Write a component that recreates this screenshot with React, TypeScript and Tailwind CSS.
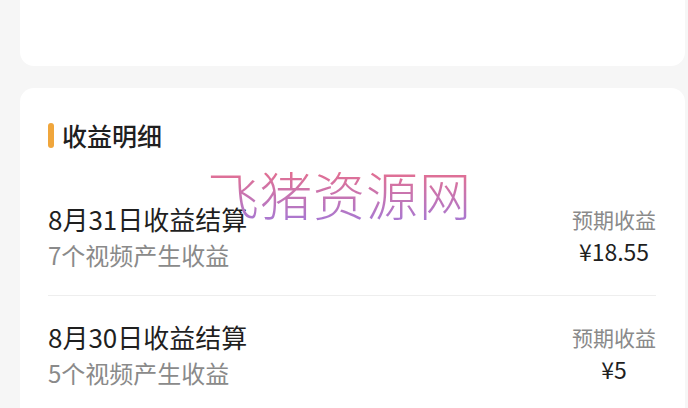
const rows = [
  { title: "8月31日收益结算", sub: "7个视频产生收益", amount: "¥18.55" },
  { title: "8月30日收益结算", sub: "5个视频产生收益", amount: "¥5" },
];

const App = () => {
  return (
    <div
      className="relative flex flex-col gap-[22px] bg-[#f6f6f6] pl-[20px] pr-[3px] w-[688px] h-[408px] overflow-hidden"
      style={{ fontFamily: '"Noto Sans CJK SC", "Noto Sans", sans-serif' }}
    >
      <div className="bg-white rounded-b-[14px] h-[66px] shrink-0" />

      <div className="flex-1 bg-white rounded-t-[14px] pt-[32px] pl-[28px] pr-[29px]">
        <div className="flex items-center h-[30px]">
          <span className="bg-[#f0a63c] mr-[8px] rounded-full w-[6px] h-[25px]" />
          <h2 className="font-medium text-[#1f1f1f] text-[25px] leading-none">收益明细</h2>
        </div>

        <div className="mt-[29px]">
          {rows.map((r, i) => (
            <div
              key={r.title}
              className={`flex justify-between items-start ${i === 0 ? "pt-[24px] pb-[24px] border-b border-[#eeeeee]" : "pt-[25px]"}`}
            >
              <div className="flex flex-col gap-[4px]">
                <span className="text-[#1f1f1f] text-[26px] leading-[32px]">{r.title}</span>
                <span className="text-[#8a8a8a] text-[24px] leading-[32px]">{r.sub}</span>
              </div>
              <div className="flex flex-col items-center gap-[4px] pt-[2px]">
                <span className="text-[#8a8a8a] text-[21px] leading-[28px]">预期收益</span>
                <span className="text-[#1f1f1f] text-[23px] leading-[28px]">{r.amount}</span>
              </div>
            </div>
          ))}
        </div>
      </div>

      <div className="top-[162px] left-[207px] absolute bg-clip-text bg-gradient-to-b from-[#ee6a82] to-[#a277d8] font-light text-[52px] text-transparent leading-[64px] tracking-[1px] pointer-events-none select-none">
        飞猪资源网
      </div>
    </div>
  );
};

export default App;
